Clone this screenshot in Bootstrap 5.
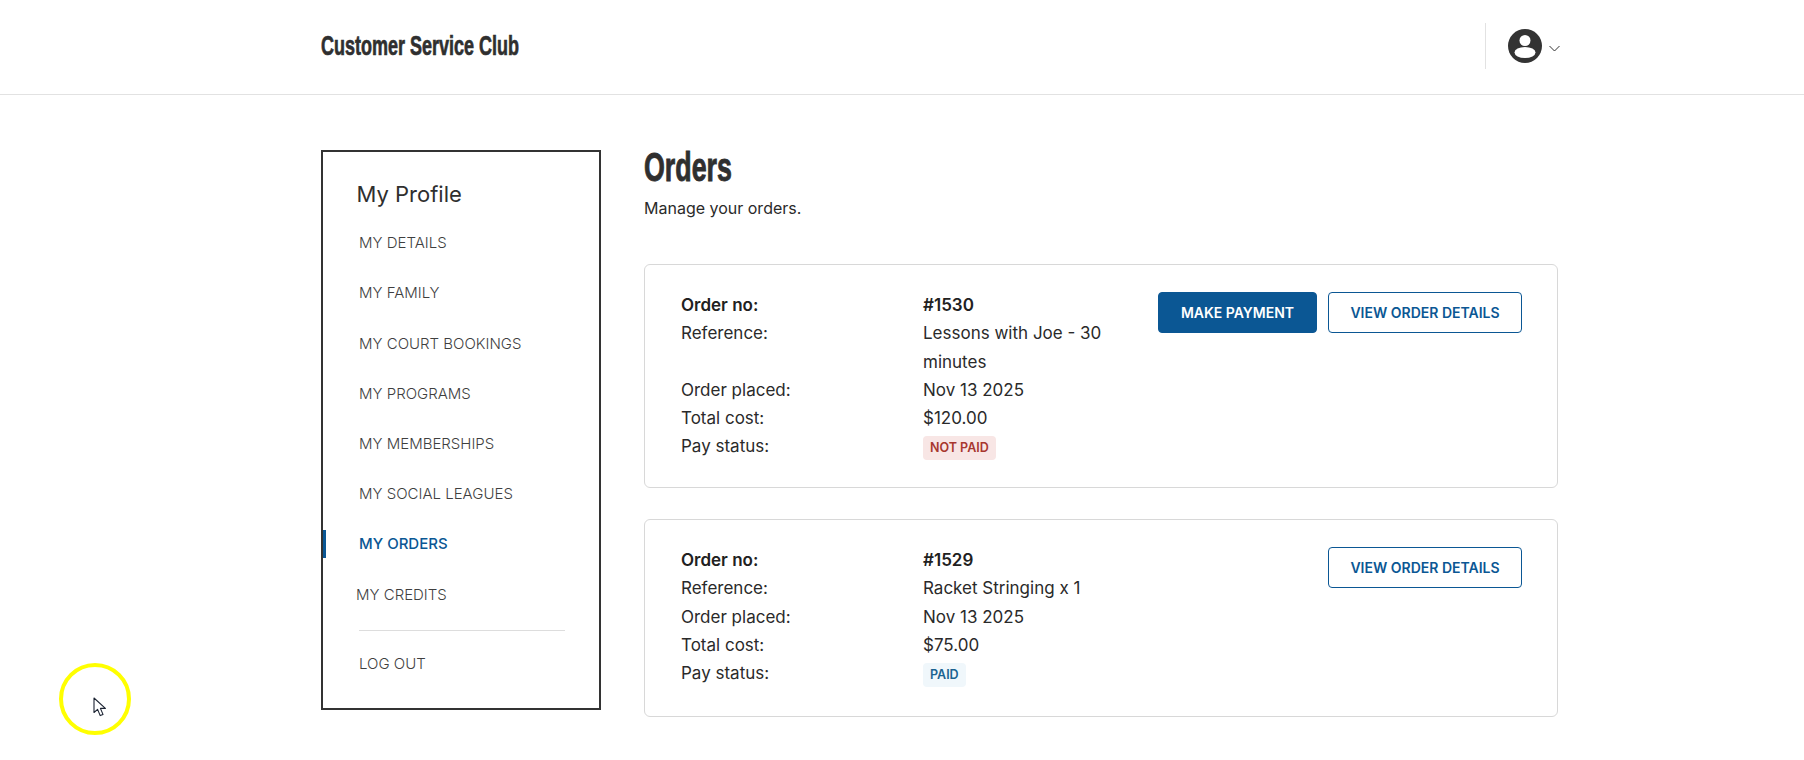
<!DOCTYPE html>
<html lang="en">
<head>
  <meta charset="UTF-8">
  <meta name="viewport" content="width=device-width, initial-scale=1.0" />
  <title>Orders</title>
  <link href="https://cdn.jsdelivr.net/npm/bootstrap@5.3.0/dist/css/bootstrap.min.css" rel="stylesheet">
  <style>
    body {
      font-family: Inter, "Liberation Sans", sans-serif;
      font-size: 16px;
      color: #212529;
      background: #fff;
      height: 760px;
      overflow: hidden;
    }

    .site-wrap {
      width: 1237px;
      margin-left: 321px;
    }

    .top-bar {
      height: 95px;
      border-bottom: 1px solid #e2e2e2;
    }

    /* no Anton here, so squeeze a bold sans to get the same narrow look */
    .brand-name {
      font-family: "Liberation Sans", sans-serif;
      font-weight: 700;
      font-size: 28px;
      line-height: 32px;
      color: #2f2f2f;
      transform: scaleX(.643);
      transform-origin: left center;
      white-space: nowrap;
      -webkit-text-stroke: .7px #2f2f2f;
      margin-top: -2px;
    }

    .user-box {
      height: 46px;
      padding-left: 21px;
      border-left: 1px solid #e2e2e2;
      margin-right: -2px;
      margin-top: -3px;
    }

    .user-arrow {
      margin-left: 6px;
      margin-top: 5px;
    }

    .side-panel {
      width: 280px;
      height: 560px;
      margin-top: 55px;
      border: 2px solid #333;
      padding: 27px 34px 0 0;
      flex-shrink: 0;
    }

    .side-title {
      font-size: 22px;
      font-weight: 400;
      color: #2f2f2f;
      margin: 0 0 20px 33.5px;
      line-height: 30px;
    }

    .side-link {
      display: block;
      font-size: 15px;
      font-weight: 300;
      color: #3f3f3f;
      line-height: 28px;
      margin-bottom: 22.3px;
      padding-left: 36px;
      text-decoration: none;
    }

    .side-link.current {
      color: #0b5794;
      font-weight: 500;
      border-left: 3px solid #0b5794;
      padding-left: 33px;
      margin-top: -1px;
      margin-bottom: 23.3px;
    }

    .side-link.shifted {
      padding-left: 33px;
    }

    .side-rule {
      margin: -1px 0 19px 36px;
      border-color: #ddd;
      opacity: 1;
    }

    .main-col {
      margin-left: 43px;
      margin-top: 48px;
      width: 914px;
    }

    .page-title {
      font-family: "Liberation Sans", sans-serif;
      font-weight: 700;
      font-size: 40px;
      line-height: 48px;
      color: #2f2f2f;
      margin: 0;
      transform: scaleX(.67);
      transform-origin: left center;
      -webkit-text-stroke: .9px #2f2f2f;
    }

    .page-sub {
      margin: 5px 0 0;
      line-height: 24px;
      color: #2a2a2a;
    }

    .order-box {
      border: 1px solid #d8d8d8;
      border-radius: 6px;
      padding: 26px 35px 0 36px;
    }

    .order-one {
      height: 224px;
      margin-top: 44px;
    }

    .order-two {
      height: 198px;
      margin-top: 31px;
    }

    .order-info {
      width: 430px;
      grid-template-columns: 242px 188px;
      font-size: 17px;
      line-height: 28.3px;
      color: #2a2a2a;
    }

    .order-info strong {
      font-weight: 600;
      color: #212121;
    }

    .btn-row {
      gap: 11px;
    }

    .act-btn {
      font-size: 14px;
      font-weight: 600;
      height: 41px;
      border-radius: 4px;
      padding: 0;
      line-height: 39px;
      margin-top: 1px;
    }

    .pay-btn {
      width: 159px;
      background: #0b5794;
      border: 1px solid #0b5794;
      color: #fff;
    }

    .view-btn {
      width: 194px;
      background: #fff;
      border: 1px solid #0b5794;
      color: #0b5794;
    }

    .pay-tag {
      font-size: 12.5px;
      font-weight: 600;
      border-radius: 4px;
      padding: 0 7px;
      line-height: 24px;
      vertical-align: top;
      margin-top: 4px;
    }

    .tag-unpaid {
      background: #f8e6e5;
      color: #a8372f;
    }

    .tag-paid {
      background: #f0f7fb;
      color: #1b6391;
    }

    .click-ring {
      position: absolute;
      left: 59px;
      top: 663px;
      width: 72px;
      height: 72px;
      border: 4px solid #ffff00;
      border-radius: 50%;
    }

    .click-arrow {
      position: absolute;
      left: 93px;
      top: 697px;
    }
  </style>
</head>

<body>
  <header class="top-bar">
    <div class="site-wrap d-flex justify-content-between align-items-center h-100">
      <div class="brand-name">Customer Service Club</div>
      <div class="user-box d-flex align-items-center">
        <svg width="36" height="36" viewBox="0 0 36 36">
          <circle cx="18" cy="18" r="17" fill="#333" />
          <circle cx="18" cy="12.5" r="5.5" fill="#fff" />
          <ellipse cx="18" cy="24.5" rx="10.5" ry="5.5" fill="#fff" />
        </svg>
        <svg class="user-arrow" width="11" height="7" viewBox="0 0 11 7">
          <path d="M.5 1 5.500 6 10.500 1" fill="none" stroke="#333" stroke-width="1" />
        </svg>
      </div>
    </div>
  </header>

  <div class="site-wrap d-flex">
    <nav class="side-panel">
      <h2 class="side-title">My Profile</h2>
      <a class="side-link" href="#">MY DETAILS</a>
      <a class="side-link" href="#">MY FAMILY</a>
      <a class="side-link" href="#">MY COURT BOOKINGS</a>
      <a class="side-link" href="#">MY PROGRAMS</a>
      <a class="side-link" href="#">MY MEMBERSHIPS</a>
      <a class="side-link" href="#">MY SOCIAL LEAGUES</a>
      <a class="side-link current" href="#">MY ORDERS</a>
      <a class="side-link shifted" href="#">MY CREDITS</a>
      <hr class="side-rule">
      <a class="side-link" href="#">LOG OUT</a>
    </nav>

    <main class="main-col">
      <h1 class="page-title">Orders</h1>
      <p class="page-sub">Manage your orders.</p>

      <section class="order-box order-one d-flex justify-content-between align-items-start">
        <div class="order-info d-grid">
          <strong>Order no:</strong><strong>#1530</strong>
          <span>Reference:</span><span>Lessons with Joe - 30 minutes</span>
          <span>Order placed:</span><span>Nov 13 2025</span>
          <span>Total cost:</span><span>$120.00</span>
          <span>Pay status:</span><span><span class="badge pay-tag tag-unpaid">NOT PAID</span></span>
        </div>
        <div class="d-flex btn-row">
          <button class="btn act-btn pay-btn" type="button">MAKE PAYMENT</button>
          <button class="btn act-btn view-btn" type="button">VIEW ORDER DETAILS</button>
        </div>
      </section>

      <section class="order-box order-two d-flex justify-content-between align-items-start">
        <div class="order-info d-grid">
          <strong>Order no:</strong><strong>#1529</strong>
          <span>Reference:</span><span>Racket Stringing x 1</span>
          <span>Order placed:</span><span>Nov 13 2025</span>
          <span>Total cost:</span><span>$75.00</span>
          <span>Pay status:</span><span><span class="badge pay-tag tag-paid">PAID</span></span>
        </div>
        <button class="btn act-btn view-btn" type="button">VIEW ORDER DETAILS</button>
      </section>
    </main>
  </div>

  <div class="click-ring"></div>
  <svg class="click-arrow" width="14" height="21" viewBox="0 0 14 21">
    <path d="M1 1V15.5L4.6 12.4 7.2 18.6 10 17.4 7.4 11.4H12.4Z" fill="#fff" stroke="#1c2433" stroke-width="1.1" stroke-linejoin="round" />
  </svg>
</body>
</html>
